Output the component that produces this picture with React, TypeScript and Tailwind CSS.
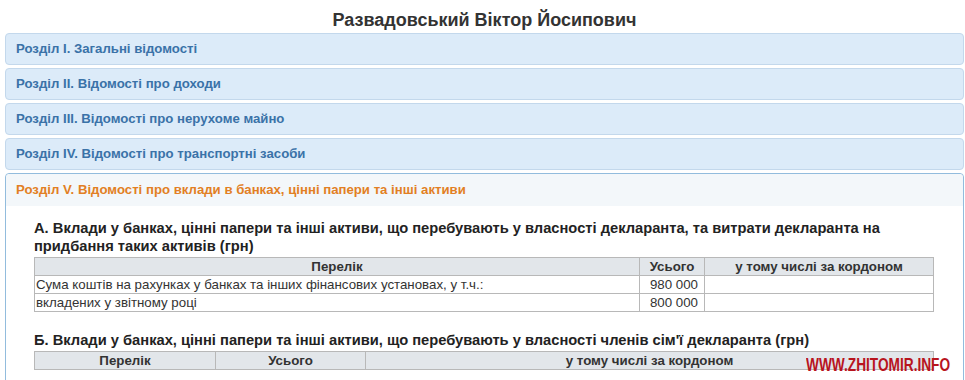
import React from "react"

const sections = [
  "Розділ I. Загальні відомості",
  "Розділ II. Відомості про доходи",
  "Розділ III. Відомості про нерухоме майно",
  "Розділ IV. Відомості про транспортні засоби",
]

const rowsA = [
  { name: "Сума коштів на рахунках у банках та інших фінансових установах, у т.ч.:", total: "980 000" },
  { name: "вкладених у звітному році", total: "800 000" },
]

const th = "border border-[#b8b8b8] bg-[#e2e6ea] font-bold text-center h-[18px] leading-[16px] p-0"
const td = "border border-[#b8b8b8] h-[18px] leading-[16px] px-[1px] py-0"

export default function App() {
  return (
    <div className="relative h-[380px] overflow-hidden bg-white pl-[5px] pr-[1px] font-['Liberation_Sans',Arial,sans-serif] text-[#333]">
      <h1 className="pt-[10px] pb-[2px] text-center text-[18px] leading-[21px] font-bold text-[#333]">
        Развадовський Віктор Йосипович
      </h1>

      <div className="flex flex-col gap-[3px]">
        {sections.map((s) => (
          <div
            key={s}
            className="flex h-[32px] items-center rounded-[4px] border border-[#c3d8ec] bg-[#dcebf9] px-[10px] text-[13.2px] font-bold text-[#3a72a8]"
          >
            {s}
          </div>
        ))}

        <div className="rounded-[4px] border border-[#92bcdd] bg-white">
          <div className="flex h-[32px] items-center rounded-t-[4px] bg-[#f3f7fa] px-[10px] text-[13.2px] font-bold text-[#e27f24]">
            Розділ V. Відомості про вклади в банках, цінні папери та інші активи
          </div>

          <div className="pl-[28px] pt-[13px] pb-[20px]">
            <h3 className="w-[900px] text-[14.7px] leading-[18px] font-bold text-[#222]">
              А. Вклади у банках, цінні папери та інші активи, що перебувають у власності декларанта, та витрати декларанта на придбання таких активів (грн)
            </h3>
            <table className="mt-[2px] w-[900px] border-collapse text-[13.3px] text-[#333]">
              <thead>
                <tr>
                  <th className={th}>Перелік</th>
                  <th className={`${th} w-[65px]`}>Усього</th>
                  <th className={`${th} w-[229px]`}>у тому числі за кордоном</th>
                </tr>
              </thead>
              <tbody>
                {rowsA.map((r) => (
                  <tr key={r.name}>
                    <td className={td}>{r.name}</td>
                    <td className={`${td} text-right pr-[6px]`}>{r.total}</td>
                    <td className={td}></td>
                  </tr>
                ))}
              </tbody>
            </table>

            <h3 className="mt-[19px] w-[900px] text-[14.7px] leading-[18px] font-bold text-[#222]">
              Б. Вклади у банках, цінні папери та інші активи, що перебувають у власності членів сім'ї декларанта (грн)
            </h3>
            <table className="mt-[2px] w-[900px] border-collapse text-[13.3px] text-[#333]">
              <thead>
                <tr>
                  <th className={`${th} w-[181px]`}>Перелік</th>
                  <th className={`${th} w-[150px]`}>Усього</th>
                  <th className={th}>у тому числі за кордоном</th>
                </tr>
              </thead>
            </table>
          </div>
        </div>
      </div>

      <div className="absolute left-[806px] top-[354px] origin-left scale-x-[0.72] whitespace-nowrap text-[19px] leading-[22px] font-bold text-[#b8141d]">
        WWW.ZHITOMIR.INFO
      </div>
    </div>
  )
}
